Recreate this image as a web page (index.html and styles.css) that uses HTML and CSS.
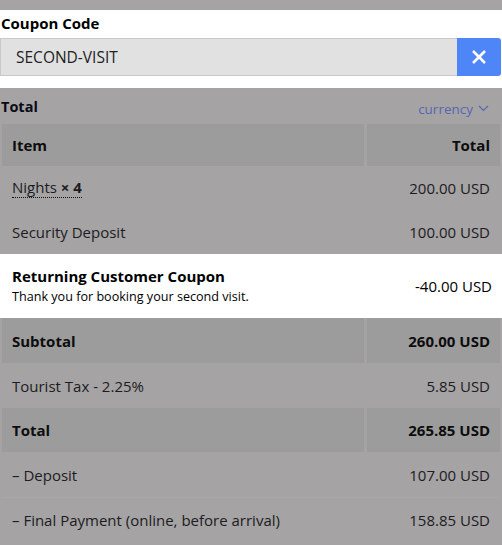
FILE: index.html
```html
<!DOCTYPE html>
<html>
<head>
<meta charset="utf-8">
<link rel="stylesheet" href="styles.css">
</head>
<body>
<div class="topstrip"></div>
<section class="coupon">
  <div class="coupon-label">Coupon Code</div>
  <div class="input-group">
    <div class="input">SECOND-VISIT</div>
    <button class="clear-btn" aria-label="Remove">
      <svg width="16" height="16" viewBox="0 0 16 16"><path d="M2 2 L14 14 M14 2 L2 14" stroke="#fff" stroke-width="2.6" stroke-linecap="butt"/></svg>
    </button>
  </div>
</section>
<section class="summary">
  <div class="summary-head">
    <div class="summary-title">Total</div>
    <div class="currency">currency
      <svg width="11" height="7" viewBox="0 0 11 7"><path d="M1 1 L5.5 5.5 L10 1" fill="none" stroke="#5767b3" stroke-width="1.2"/></svg>
    </div>
  </div>
  <div class="table">
    <div class="row dark bold head">
      <div class="c1">Item</div><div class="c2">Total</div>
    </div>
    <div class="row">
      <div class="c1"><span class="dotted">Nights <b>× 4</b></span></div><div class="c2">200.00 USD</div>
    </div>
    <div class="row">
      <div class="c1">Security Deposit</div><div class="c2">100.00 USD</div>
    </div>
    <div class="row highlight">
      <div class="c1">
        <div class="coupon-title">Returning Customer Coupon</div>
        <div class="coupon-sub">Thank you for booking your second visit.</div>
      </div>
      <div class="c2">-40.00 USD</div>
    </div>
    <div class="row dark bold tall">
      <div class="c1">Subtotal</div><div class="c2">260.00 USD</div>
    </div>
    <div class="row tall">
      <div class="c1">Tourist Tax - 2.25%</div><div class="c2">5.85 USD</div>
    </div>
    <div class="row dark bold">
      <div class="c1">Total</div><div class="c2">265.85 USD</div>
    </div>
    <div class="row tall">
      <div class="c1">– Deposit</div><div class="c2">107.00 USD</div>
    </div>
    <div class="row lined">
      <div class="c1">– Final Payment (online, before arrival)</div><div class="c2">158.85 USD</div>
    </div>
  </div>
</section>
</body>
</html>
```
FILE: styles.css
```css
html, body {
  margin: 0;
  padding: 0;
}
body {
  background: #a5a3a4;
  font-family: "Open Sans", "Noto Sans", sans-serif;
  color: #1c1c22;
  width: 502px;
  height: 545px;
  overflow: hidden;
}
.topstrip {
  height: 10px;
}
.coupon {
  background: #fff;
  padding: 3px 0 12px 0;
}
.coupon-label {
  font-weight: 700;
  font-size: 15px;
  line-height: 20px;
  color: #000;
  padding-left: 1px;
  margin-bottom: 5px;
}
.input-group {
  display: flex;
  height: 38px;
  padding-right: 1px;
}
.input {
  flex: 1;
  background: #e1e1e1;
  border: 1px solid #c9c9c9;
  border-right: none;
  display: flex;
  align-items: center;
  padding-left: 15px;
  font-size: 15.5px;
  color: #222;
}
.clear-btn {
  width: 44px;
  border: none;
  background: #4e86f7;
  border-radius: 0 3px 3px 0;
  display: flex;
  align-items: center;
  justify-content: center;
  padding: 0;
}
.summary-head {
  display: flex;
  justify-content: space-between;
  align-items: center;
  padding: 0 13px 0 1px;
  height: 36px;
}
.summary-title {
  font-weight: 700;
  font-size: 14.5px;
  color: #0a0a14;
  line-height: 20px;
  margin-top: 2px;
}
.currency {
  font-size: 13.5px;
  color: #5767b3;
  display: flex;
  align-items: center;
  gap: 5px;
  line-height: 18px;
  margin-top: 5px;
}
.table {
  display: flex;
  flex-direction: column;
}
.row {
  display: grid;
  grid-template-columns: 362px 133px;
  column-gap: 3px;
  margin: 0 3px 0 2px;
  height: 44px;
  font-size: 15px;
}
.row.tall {
  height: 45px;
}
.row.head {
  height: 42px;
}
.row > div {
  display: flex;
  align-items: center;
}
.row .c1 {
  padding-left: 10px;
}
.row .c2 {
  justify-content: flex-end;
  padding-right: 10px;
}
.row.dark > div {
  background: #9d9c9c;
}
.row.bold {
  font-weight: 700;
  color: #0d0d0d;
}
.row.highlight {
  background: #fff;
  margin: 0;
  height: 64px;
  grid-template-columns: 364px 138px;
  color: #000;
}
.row.highlight .c1 {
  padding-left: 12px;
  flex-direction: column;
  align-items: flex-start;
  justify-content: center;
}
.row.highlight .c2 {
  padding-right: 13px;
}
.coupon-title {
  font-weight: 700;
  font-size: 15px;
  line-height: 20px;
}
.coupon-sub {
  font-size: 12.6px;
  line-height: 18px;
  margin-top: 2px;
}
.row.lined {
  border-top: 1px solid #a9a8a8;
}
.dotted {
  border-bottom: 1px dotted #111;
  line-height: 19px;
}
```
